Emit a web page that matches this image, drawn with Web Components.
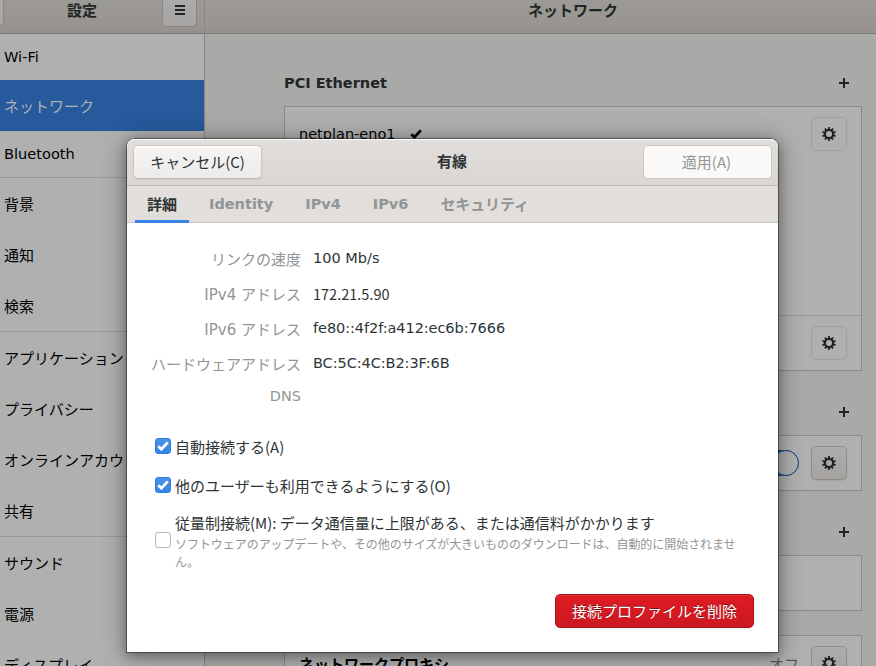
<!DOCTYPE html>
<html lang="ja">
<head>
<meta charset="utf-8">
<title>設定</title>
<style>
html,body{margin:0;height:100%;overflow:hidden}
body{font-family:"DejaVu Sans","Noto Sans CJK JP",sans-serif;font-size:14.5px;color:#2e3436;background:#a9a9a7}
</style>
</head>
<body>
<settings-app></settings-app>
<script>
const define=(name,html,setup)=>{
  const t=document.createElement('template');t.innerHTML=html;
  customElements.define(name,class extends HTMLElement{
    constructor(){super();this.attachShadow({mode:'open'}).append(t.content.cloneNode(true));}
    connectedCallback(){if(setup)setup(this.shadowRoot);}
  });
};

define('icon-gear',`<style>:host{display:block;width:16px;height:16px}svg{display:block}</style>
<svg width="16" height="16" viewBox="0 0 16 16" fill="none" stroke="#1f2425">
<circle cx="8" cy="8" r="4.2" stroke-width="2.3"/>
<g id="t" stroke-width="1.8"></g></svg>`,r=>{
  const g=r.getElementById('t');if(g.childNodes.length)return;
  for(let i=0;i<10;i++){const l=document.createElementNS('http://www.w3.org/2000/svg','path');
    l.setAttribute('d','M8 4V1.1');l.setAttribute('transform','rotate('+i*36+' 8 8)');g.append(l);}
});

define('gear-button',`<style>
:host{display:flex;box-sizing:border-box;width:36px;height:34px;border:1px solid #9f9f9e;border-radius:5px;align-items:center;justify-content:center;flex:none}
:host([raised]){border-color:#918c88;background:linear-gradient(#adacab,#a5a3a0);box-shadow:0 1px 2px rgba(0,0,0,.08)}
</style><icon-gear></icon-gear>`);

define('side-row',`<style>
:host{display:flex;box-sizing:border-box;height:51px;padding:2px 0 0 4px;align-items:center;white-space:nowrap;color:#000;font-size:15px;line-height:22px;flex:none}
:host([latin]){height:46px;font-size:14.6px;padding-top:0}
:host([selected]){background:#265a9d;color:#b1b1b1}
:host([end]){height:52px;border-bottom:1px solid #9b9a99}
:host([latin][end]){height:47px}
</style><span><slot></slot></span>`);

define('side-bar',`<style>
:host{display:flex;flex-direction:column;width:204px;border-right:1px solid #8a8683;background:#b0b0b0;flex:none;overflow:hidden}
</style><slot></slot>`);

define('title-bar',`<style>
:host{display:flex;height:33px;border-bottom:1px solid #7f7876;background:linear-gradient(#9c9a96,#98948f 80%,#96908d);flex:none;font-weight:bold;font-size:15px;line-height:22px;color:#1f2425;text-align:center}
.l{width:204px;border-right:1px solid #8a8683;display:flex;overflow:hidden}
.t{flex:1;margin-left:-1px}
.m{flex:1;padding-left:65px}
.stub{width:3px;height:25px;border:1px solid #8b8683;border-width:0 1px 1px 0;border-radius:0 0 5px 0;background:#aaa9a8;box-sizing:content-box;margin-right:-1px}
.menu{box-sizing:border-box;width:35px;height:27px;margin-right:7px;border:1px solid #8b8683;border-top:0;border-radius:0 0 5px 5px;background:linear-gradient(#acaba9,#a7a5a3);display:flex;justify-content:center}
</style>
<div class="l"><i class="stub"></i><div class="t"><slot name="left"></slot></div><div class="menu">
<svg width="16" height="20" viewBox="0 0 16 20" fill="#1f2425"><path d="M3 5h10v2H3zM3 9h10v2H3zM3 13h10v2H3z"/></svg></div></div>
<div class="m"><slot name="right"></slot></div>`);

define('section-head',`<style>
:host{display:flex;height:46px;margin-top:18px;align-items:center;justify-content:space-between;padding-right:12px;font-weight:bold;line-height:18px;color:#1f2425;flex:none}
svg{display:block}
</style><span><slot></slot></span><svg width="12" height="12" viewBox="0 0 12 12" fill="#1f2425"><path d="M5 1h2v4h4v2H7v4H5V7H1V5h4z"/></svg>`);

define('net-card',`<style>
:host{display:flex;flex-direction:column;box-sizing:border-box;border:1px solid #8c8a87;background:#b0b0b0;flex:none}
</style><slot></slot>`);

define('net-row',`<style>
:host{display:flex;box-sizing:border-box;height:54px;padding:0 14px;align-items:center;justify-content:space-between;color:#000;line-height:22px;white-space:nowrap;flex:none}
div{display:flex;align-items:center}
.a{gap:14px}
.b{gap:12px}
</style><div class="a"><slot></slot></div><div class="b"><slot name="end"></slot></div>`);

define('tick-mark',`<style>:host{display:block}svg{display:block}</style>
<svg width="12" height="10" viewBox="0 0 12 10"><path d="M1.3 5.2 4.4 8.2 10.8 1.4" fill="none" stroke="currentColor" stroke-width="2.8"/></svg>`);

define('toggle-switch',`<style>:host{display:block;box-sizing:border-box;width:48px;height:26px;border:1px solid #1d4985;border-radius:13px;background:#265a9d}
i{display:block;box-sizing:border-box;margin:-1px -1px 0 auto;width:26px;height:26px;border:1px solid #1d4985;border-radius:50%;background:#b0b0b0}</style><i></i>`);

define('push-button',`<style>
:host{display:flex;box-sizing:border-box;height:34px;border:1px solid #cdc7c2;border-bottom-color:#bfb8b1;border-radius:5px;background:linear-gradient(#f6f5f4,#edebe9);align-items:center;justify-content:center;font-family:"Noto Sans CJK JP",sans-serif;font-size:15px;line-height:22px;box-shadow:0 1px 2px rgba(0,0,0,.07),inset 0 1px #fff;white-space:nowrap;flex:none}
:host([disabled]){background:#faf9f8;color:#929595;box-shadow:none;border-color:#cdc7c2;padding-right:2px}
:host([danger]){width:199px;background:linear-gradient(#e01b24,#cb1820);border-color:#a8141b;color:#fff;box-shadow:0 1px 2px rgba(0,0,0,.07),inset 0 1px rgba(255,255,255,.1);text-shadow:0 -1px rgba(0,0,0,.45)}
</style><span><slot></slot></span>`);

define('dialog-tab',`<style>
:host{display:block;box-sizing:border-box;height:37px;padding:0 12px;line-height:36px;font-weight:bold;color:#929595;white-space:nowrap}
:host([ja]){font-size:15px;line-height:37px;padding-top:1px;letter-spacing:-.1px}
:host([active]){color:#2e3436;box-shadow:inset 0 -3px #3584e4;letter-spacing:0}
</style><slot></slot>`);

define('detail-row',`<style>
:host{display:grid;grid-template-columns:174px 1fr;column-gap:12px;height:22px;line-height:22px;white-space:nowrap}
.k{text-align:right;color:#929595;font-size:15px;padding-top:1px}
.v{line-height:20px}
:host([tight]) .v{letter-spacing:-.07px}
:host([short]){height:17px;line-height:17px}
:host([short]) .k{font-size:14.5px;padding:0}
:host([cjk]) .v{font-family:"Noto Sans CJK JP",sans-serif;font-size:14.5px;line-height:22px}
</style><span class="k"><slot name="k"></slot></span><span class="v"><slot></slot></span>`);

define('check-item',`<style>
:host{display:flex;gap:4px;align-items:center;font-family:"Noto Sans CJK JP",sans-serif;font-size:15px;line-height:22px}
i{box-sizing:border-box;width:16px;height:16px;margin-top:-4px;border:1px solid #bdb5ac;border-radius:3px;background:#fff;flex:none;display:flex;align-items:center;justify-content:center}
tick-mark{display:none;color:#fff}
:host([checked]) i{margin-top:-2px;background:linear-gradient(#4b92e8,#3584e4);border-color:#2d7ce0}
:host([checked]) tick-mark{display:block}
</style><i><tick-mark></tick-mark></i><div><slot></slot></div>`);

define('connection-dialog',`<style>
:host{position:absolute;left:127px;top:139px;width:651px;height:513px;display:flex;flex-direction:column;background:#fff;border-radius:8px 8px 0 0;box-shadow:0 0 0 1px rgba(0,0,0,.38),0 3px 12px 1px rgba(0,0,0,.32),0 2px 26px 3px rgba(0,0,0,.24)}
header{display:grid;grid-template-columns:129px 1fr 129px;align-items:center;height:46px;padding:0 6px;border-bottom:1px solid #bfb8b1;background:linear-gradient(#e1dedb,#dad6d2);border-radius:8px 8px 0 0;box-shadow:inset 0 1px #fff;font-size:15px;line-height:22px}
header b{text-align:center;padding-right:1px}
nav{display:flex;gap:8px;height:37px;padding-left:8px;background:#e1dedb;box-shadow:inset 0 -1px #cdc7c2}
.details{display:grid;row-gap:13px;padding-top:25px}
.checks{padding:31px 40px 0 28px;display:flex;flex-direction:column}
.c2{margin-top:17px}
.c3{margin-top:15px}
small{display:block;padding-top:1px;font-size:12px;line-height:18px;letter-spacing:-.05px;color:#929595}
.foot{display:flex;justify-content:flex-end;padding:23px 24px 0 0}
</style>
<header><push-button>キャンセル(C)</push-button><b>有線</b><push-button disabled>適用(A)</push-button></header>
<nav><dialog-tab ja active>詳細</dialog-tab><dialog-tab>Identity</dialog-tab><dialog-tab>IPv4</dialog-tab><dialog-tab>IPv6</dialog-tab><dialog-tab ja>セキュリティ</dialog-tab></nav>
<div class="details">
<detail-row><span slot="k">リンクの速度</span>100 Mb/s</detail-row>
<detail-row cjk><span slot="k">IPv4 アドレス</span>172.21.5.90</detail-row>
<detail-row tight><span slot="k">IPv6 アドレス</span>fe80::4f2f:a412:ec6b:7666</detail-row>
<detail-row tight><span slot="k">ハードウェアアドレス</span>BC:5C:4C:B2:3F:6B</detail-row>
<detail-row short><span slot="k">DNS</span></detail-row>
</div>
<div class="checks">
<check-item checked>自動接続する(A)</check-item>
<check-item checked class="c2">他のユーザーも利用できるようにする(O)</check-item>
<check-item class="c3">従量制接続(M): データ通信量に上限がある、または通信料がかかります<small>ソフトウェアのアップデートや、その他のサイズが大きいもののダウンロードは、自動的に開始されません。</small></check-item>
</div>
<div class="foot"><push-button danger>接続プロファイルを削除</push-button></div>`);

define('settings-app',`<style>
:host{display:flex;flex-direction:column;width:876px;height:666px;overflow:hidden;position:relative}
.body{display:flex;flex:1;min-height:0}
main{flex:1;min-width:0;display:flex;flex-direction:column;padding:8px 14px 0 79px;background:#a9a9a7}
.tall{height:265px}
.second{margin-top:154px;height:55px;border-top:1px solid #9b9a99}
.proxy{margin-top:24px}
b,.off{font-size:15px}
.proxy b{padding-top:3px}
.off{color:#555;padding-top:4px}
</style>
<title-bar><span slot="left">設定</span><span slot="right">ネットワーク</span></title-bar>
<div class="body">
<side-bar>
<side-row latin>Wi-Fi</side-row><side-row selected>ネットワーク</side-row><side-row latin end>Bluetooth</side-row>
<side-row>背景</side-row><side-row>通知</side-row><side-row end>検索</side-row>
<side-row>アプリケーション</side-row><side-row>プライバシー</side-row><side-row>オンラインアカウント</side-row><side-row end>共有</side-row>
<side-row>サウンド</side-row><side-row>電源</side-row><side-row>ディスプレイ</side-row>
</side-bar>
<main>
<section-head>PCI Ethernet</section-head>
<net-card class="tall">
<net-row><span>netplan-eno1</span><tick-mark></tick-mark><gear-button slot="end"></gear-button></net-row>
<net-row class="second"><gear-button slot="end"></gear-button></net-row>
</net-card>
<section-head></section-head>
<net-card><net-row><toggle-switch slot="end"></toggle-switch><gear-button raised slot="end"></gear-button></net-row></net-card>
<section-head></section-head>
<net-card><net-row></net-row></net-card>
<net-card class="proxy"><net-row><b>ネットワークプロキシ</b><span slot="end" class="off">オフ</span><gear-button raised slot="end"></gear-button></net-row></net-card>
</main>
</div>
<connection-dialog></connection-dialog>`);
</script>
</body>
</html>
